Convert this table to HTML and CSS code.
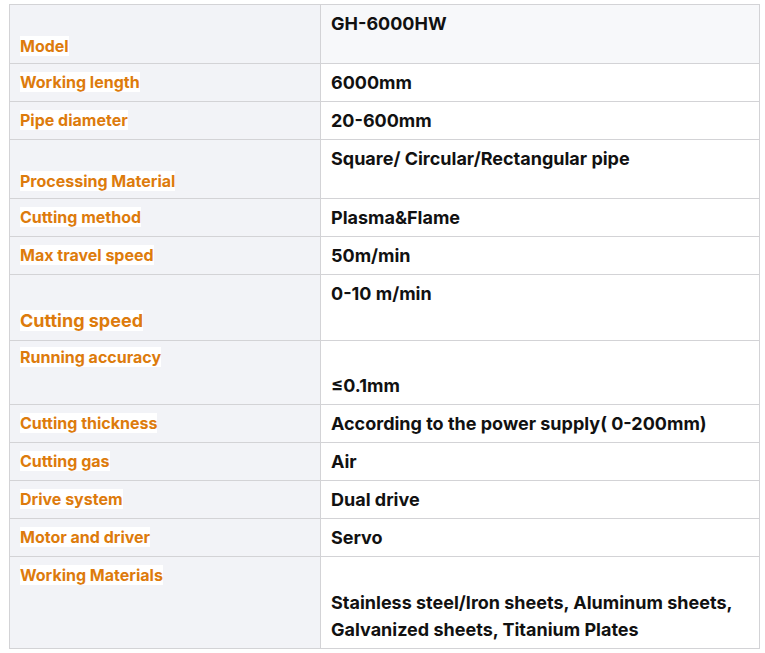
FILE: index.html
```html
<!DOCTYPE html>
<html>
<head>
<meta charset="utf-8">
<link rel="stylesheet" href="styles.css">
</head>
<body>
<table class="spec">
  <tr class="head">
    <td class="label low"><div class="gap23"></div><span class="hl">Model</span></td>
    <td class="value">GH-6000HW<div class="gap"></div></td>
  </tr>
  <tr>
    <td class="label"><span class="hl">Working length</span></td>
    <td class="value">6000mm</td>
  </tr>
  <tr>
    <td class="label"><span class="hl">Pipe diameter</span></td>
    <td class="value">20-600mm</td>
  </tr>
  <tr>
    <td class="label low"><div class="gap23"></div><span class="hl">Processing Material</span></td>
    <td class="value">Square/ Circular/Rectangular pipe<div class="gap"></div></td>
  </tr>
  <tr>
    <td class="label"><span class="hl">Cutting method</span></td>
    <td class="value">Plasma&amp;Flame</td>
  </tr>
  <tr>
    <td class="label"><span class="hl">Max travel speed</span></td>
    <td class="value">50m/min</td>
  </tr>
  <tr>
    <td class="label lower"><div class="gap24"></div><div class="big"><span class="hl">Cutting speed</span></div></td>
    <td class="value">0-10 m/min</td>
  </tr>
  <tr>
    <td class="label high"><span class="hl">Running accuracy</span></td>
    <td class="value lower"><div class="gap24"></div><div class="tall">≤0.1mm</div></td>
  </tr>
  <tr>
    <td class="label"><span class="hl">Cutting thickness</span></td>
    <td class="value">According to the power supply( 0-200mm)</td>
  </tr>
  <tr>
    <td class="label"><span class="hl">Cutting gas</span></td>
    <td class="value">Air</td>
  </tr>
  <tr>
    <td class="label"><span class="hl">Drive system</span></td>
    <td class="value">Dual drive</td>
  </tr>
  <tr>
    <td class="label"><span class="hl">Motor and driver</span></td>
    <td class="value">Servo</td>
  </tr>
  <tr class="last">
    <td class="label"><span class="hl">Working Materials</span></td>
    <td class="value lower"><div class="gap24"></div><div class="multi">Stainless steel/Iron sheets, Aluminum sheets,<br>Galvanized sheets, Titanium Plates</div></td>
  </tr>
</table>
</body>
</html>
```
FILE: styles.css
```css
html, body {
  margin: 0;
  padding: 0;
  background: #ffffff;
}
body {
  padding: 4px 0 0 9px;
  font-family: Inter, "Liberation Sans", sans-serif;
}
.spec {
  border-collapse: collapse;
  width: 751px;
  table-layout: fixed;
}
.spec td {
  border: 1px solid #d3d3d6;
  padding: 8px 10px;
  vertical-align: top;
  line-height: 21px;
}
.spec td.label {
  width: 290px;
  background: #f2f3f7;
  color: #dd7b0c;
  font-size: 16px;
  font-weight: 700;
}
.spec td.value {
  background: #ffffff;
  color: #111111;
  font-size: 18px;
  font-weight: 700;
}
.spec tr.head td.value {
  background: #f7f8fa;
}
.spec td.low {
  padding-bottom: 6px;
}
.spec td.lower {
  padding-bottom: 5px;
}
.spec td.high {
  padding-top: 6px;
  padding-bottom: 10px;
}
.hl {
  background: #ffffff;
}
.gap {
  height: 21px;
}
.gap23 {
  height: 23px;
}
.gap24 {
  height: 24px;
}
.big {
  font-size: 18px;
  line-height: 28px;
}
.tall {
  line-height: 26px;
}
.multi {
  line-height: 27px;
}
```
